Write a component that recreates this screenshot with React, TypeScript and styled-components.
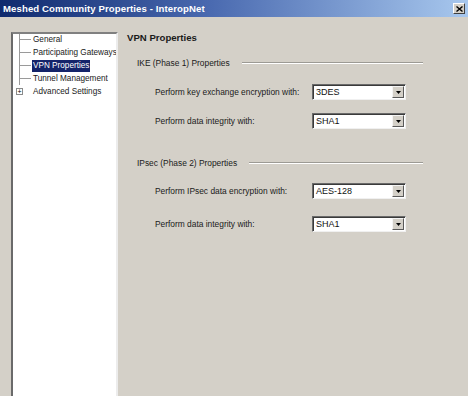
import styled, { createGlobalStyle } from "styled-components";

const GlobalStyle = createGlobalStyle`
  html, body {
    margin: 0;
    padding: 0;
    background: #d4d0c8;
  }
  body {
    font-family: "Liberation Sans", Arial, sans-serif;
  }
`;

const Window = styled.div`
  width: 468px;
  height: 396px;
  background: #d4d0c8;
  display: flex;
  flex-direction: column;
  overflow: hidden;
`;

const TitleBar = styled.div`
  height: 17px;
  flex: none;
  display: flex;
  align-items: center;
  justify-content: space-between;
  padding: 0 3px 0 3px;
  background: linear-gradient(to right, #0f2a6e 0%, #4a6ab0 45%, #a8c8ee 100%);
`;

const TitleText = styled.span`
  color: #ffffff;
  font-weight: bold;
  font-size: 9.6px;
  letter-spacing: 0.1px;
`;

const CloseButton = styled.div`
  width: 12px;
  height: 11px;
  box-sizing: border-box;
  background: #d4d0c8;
  border-top: 1px solid #ffffff;
  border-left: 1px solid #ffffff;
  border-right: 1px solid #404040;
  border-bottom: 1px solid #404040;
  display: flex;
  align-items: center;
  justify-content: center;
`;

const Body = styled.div`
  flex: 1;
  display: flex;
  gap: 9px;
  padding: 14px 0 0 11px;
  min-height: 0;
`;

const TreePanel = styled.div`
  width: 107px;
  flex: none;
  box-sizing: border-box;
  margin-top: 1px;
  background: #ffffff;
  border-top: 2px solid #808080;
  border-left: 2px solid #6a6a6a;
  border-right: 2px solid #ececec;
  margin-bottom: -4px;
  overflow: hidden;
`;

const TreeList = styled.div`
  position: relative;
  margin-top: -1px;
`;

const TreeRow = styled.div`
  height: 13px;
  display: flex;
  align-items: center;
  position: relative;
  font-size: 8.2px;
  color: #1a1a1a;
`;

const Connector = styled.span`
  width: 12px;
  flex: none;
  margin-left: 6px;
  height: 1px;
  background: #9a9a9a;
`;

const ExpandBox = styled.span`
  width: 7px;
  height: 7px;
  flex: none;
  box-sizing: border-box;
  margin-left: 3px;
  margin-right: 8px;
  border: 1px solid #8a8a8a;
  background: #ffffff;
  display: flex;
  align-items: center;
  justify-content: center;
  font-size: 7px;
  line-height: 1;
  color: #000;
`;

const TreeLabel = styled.span<{ $selected?: boolean }>`
  padding: 0 1px;
  margin-left: 1px;
  line-height: 12px;
  white-space: nowrap;
  background: ${(p) => (p.$selected ? "#14246a" : "transparent")};
  color: ${(p) => (p.$selected ? "#ffffff" : "#1a1a1a")};
`;

const VerticalGuide = styled.span`
  position: absolute;
  left: 6px;
  top: 0;
  width: 1px;
  height: 52px;
  background: #9a9a9a;
`;

const Content = styled.div`
  flex: 1;
  display: flex;
  flex-direction: column;
  color: #1a1a1a;
`;

const PageTitle = styled.div`
  font-weight: bold;
  font-size: 9.6px;
  line-height: 12px;
  margin-top: 1px;
`;

const Section = styled.div<{ $top: number }>`
  margin-top: ${(p) => p.$top}px;
  padding-left: 10px;
  display: flex;
  flex-direction: column;
`;

const SectionHeader = styled.div`
  display: flex;
  align-items: center;
  font-size: 8.4px;
  line-height: 12px;
`;

const EtchedLine = styled.span`
  flex: 1;
  margin-left: 12px;
  margin-right: 45px;
  height: 0;
  border-top: 1px solid #9c9a94;
  border-bottom: 1px solid #ffffff;
`;

const FieldRow = styled.div<{ $top: number }>`
  display: flex;
  align-items: center;
  margin-top: ${(p) => p.$top}px;
  padding-left: 18px;
  height: 16px;
`;

const FieldLabel = styled.span`
  width: 157px;
  flex: none;
  font-size: 8.4px;
  white-space: nowrap;
`;

const Select = styled.div`
  width: 94px;
  height: 16px;
  box-sizing: border-box;
  display: flex;
  align-items: center;
  background: #ffffff;
  border-top: 1px solid #6a6a6a;
  border-left: 1px solid #6a6a6a;
  border-right: 1px solid #f0f0f0;
  border-bottom: 1px solid #f0f0f0;
  box-shadow: inset 1px 1px 0 #3a3a3a;
`;

const SelectValue = styled.span`
  flex: 1;
  padding-left: 3px;
  font-size: 9px;
  color: #111;
`;

const DropButton = styled.span`
  width: 12px;
  height: 12px;
  margin-right: 1px;
  box-sizing: border-box;
  background: #d4d0c8;
  border-top: 1px solid #f4f4f4;
  border-left: 1px solid #f4f4f4;
  border-right: 1px solid #5a5a5a;
  border-bottom: 1px solid #5a5a5a;
  display: flex;
  align-items: center;
  justify-content: center;
`;

const Arrow = () => (
  <svg width="5" height="3" viewBox="0 0 5 3">
    <path d="M0 0h5L2.5 3z" fill="#000" />
  </svg>
);

const CloseGlyph = () => (
  <svg width="7" height="6" viewBox="0 0 7 6">
    <path d="M0.5 0.5L6.5 5.5M6.5 0.5L0.5 5.5" stroke="#000" strokeWidth="1.4" />
  </svg>
);

interface field {
  label: string;
  value: string;
  top: number;
}

interface section {
  title: string;
  top: number;
  fields: field[];
}

const sections: section[] = [
  {
    title: "IKE (Phase 1) Properties",
    top: 13,
    fields: [
      { label: "Perform key exchange encryption with:", value: "3DES", top: 15 },
      { label: "Perform data integrity with:", value: "SHA1", top: 13 },
    ],
  },
  {
    title: "IPsec (Phase 2) Properties",
    top: 28,
    fields: [
      { label: "Perform IPsec data encryption with:", value: "AES-128", top: 14 },
      { label: "Perform data integrity with:", value: "SHA1", top: 17 },
    ],
  },
];

const treeItems = [
  "General",
  "Participating Gateways",
  "VPN Properties",
  "Tunnel Management",
];

export default function App() {
  return (
    <>
      <GlobalStyle />
      <Window>
        <TitleBar>
          <TitleText>Meshed Community Properties - InteropNet</TitleText>
          <CloseButton>
            <CloseGlyph />
          </CloseButton>
        </TitleBar>
        <Body>
          <TreePanel>
            <TreeList>
              <VerticalGuide />
              {treeItems.map((item) => (
                <TreeRow key={item}>
                  <Connector />
                  <TreeLabel $selected={item === "VPN Properties"}>
                    {item}
                  </TreeLabel>
                </TreeRow>
              ))}
              <TreeRow>
                <ExpandBox>+</ExpandBox>
                <TreeLabel>Advanced Settings</TreeLabel>
              </TreeRow>
            </TreeList>
          </TreePanel>
          <Content>
            <PageTitle>VPN Properties</PageTitle>
            {sections.map((s) => (
              <Section key={s.title} $top={s.top}>
                <SectionHeader>
                  {s.title}
                  <EtchedLine />
                </SectionHeader>
                {s.fields.map((f) => (
                  <FieldRow key={f.label + f.value} $top={f.top}>
                    <FieldLabel>{f.label}</FieldLabel>
                    <Select>
                      <SelectValue>{f.value}</SelectValue>
                      <DropButton>
                        <Arrow />
                      </DropButton>
                    </Select>
                  </FieldRow>
                ))}
              </Section>
            ))}
          </Content>
        </Body>
      </Window>
    </>
  );
}
